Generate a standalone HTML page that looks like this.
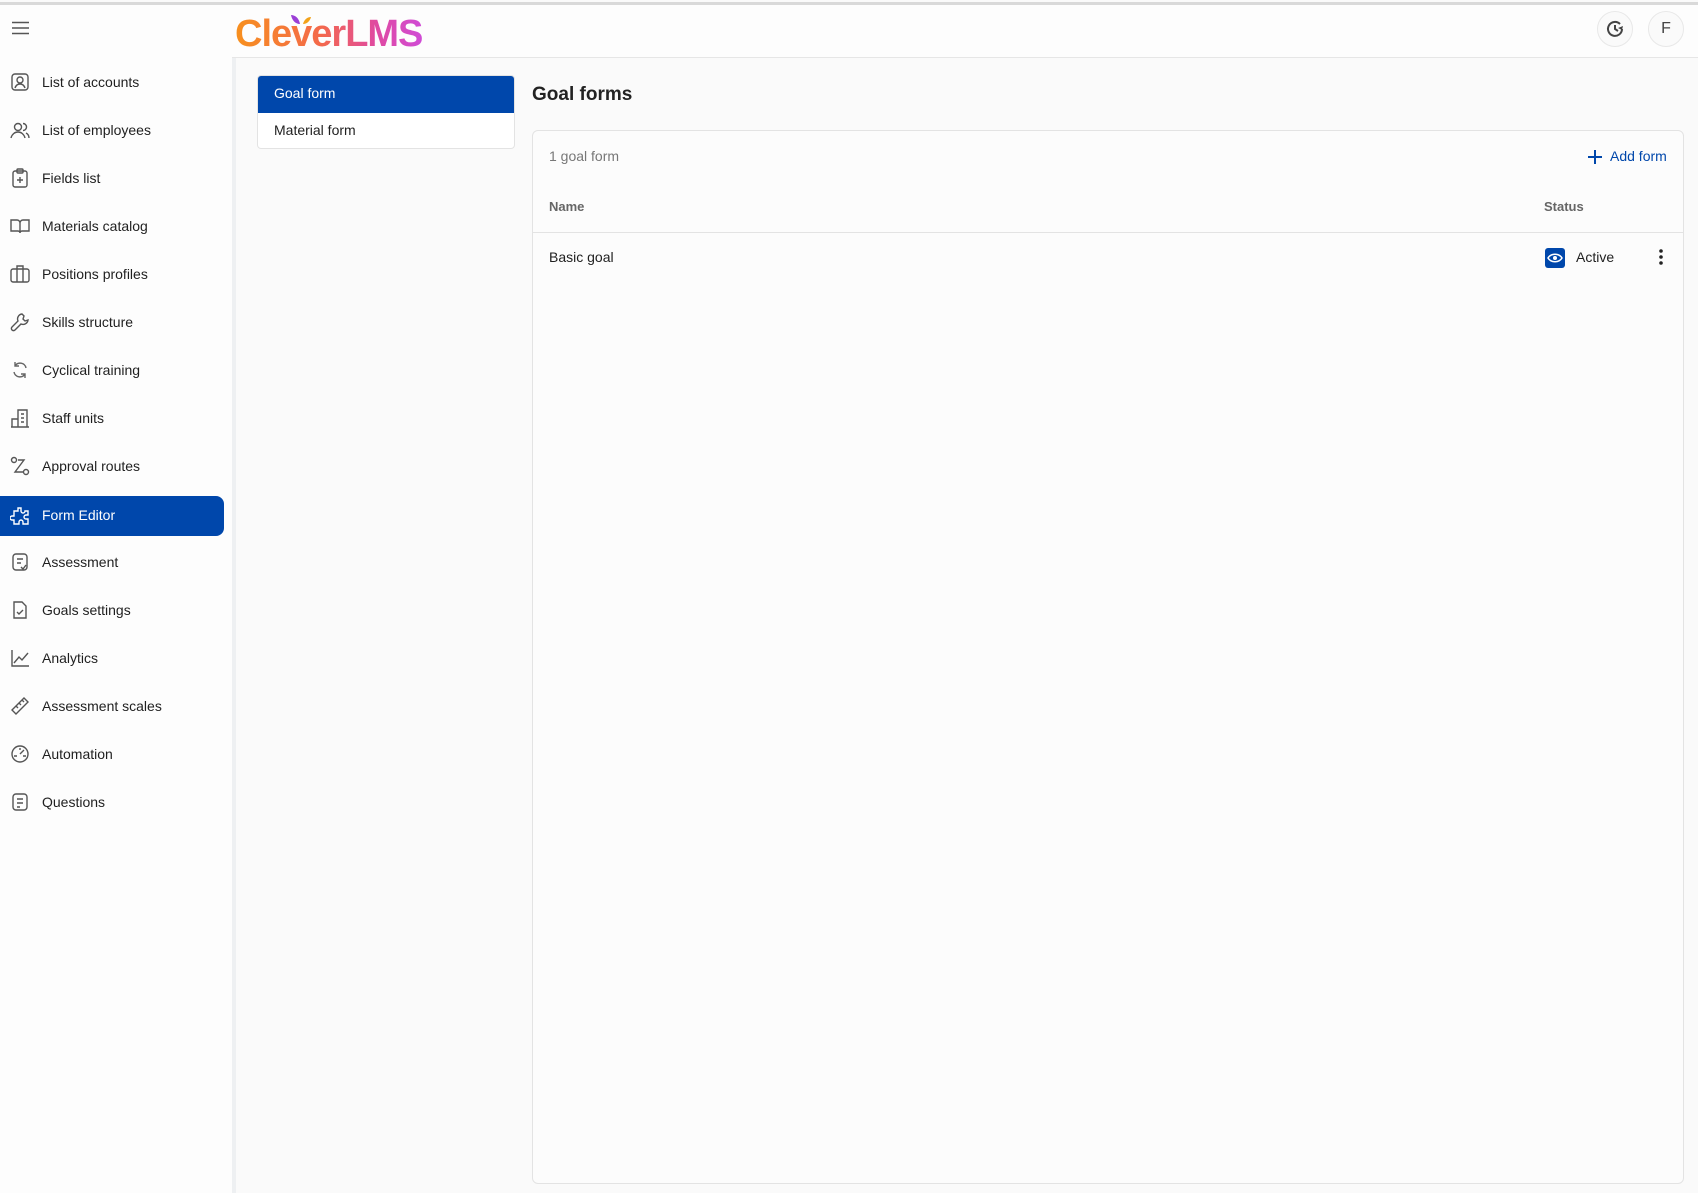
<!DOCTYPE html>
<html><head><meta charset="utf-8"><style>
*{box-sizing:border-box;margin:0;padding:0}
body{width:1698px;height:1193px;overflow:hidden;background:#fafafa;font-family:"Liberation Sans",Arial,sans-serif;color:#1f1f1f;position:relative}
.topbar{position:absolute;left:0;top:2px;width:1698px;height:3px;background:#d9d9d9}
.header{position:absolute;left:0;top:5px;width:1698px;height:52px;background:#fdfdfd}
.hline{position:absolute;left:232px;top:57px;width:1466px;height:1px;background:#e6e6e6}
.side{position:absolute;left:0;top:5px;width:232px;height:1188px;background:#fdfdfd}
.sborder{position:absolute;left:232px;top:58px;width:4px;height:1135px;background:#eef0f2}
.item{position:absolute;left:0;width:224px;height:40px;font-size:14px;line-height:40px;padding-left:42px;color:#1f1f1f}
.item svg{position:absolute;left:10px;top:10px}
.item.act{background:#0047ab;color:#fff;border-radius:0 8px 8px 0;line-height:38px}
.logo{position:absolute;left:235px;top:13px;font-size:38px;font-weight:bold;letter-spacing:-1px;background:linear-gradient(90deg,#f7901e 0%,#f46a4a 45%,#e04aa0 75%,#d04bd6 100%);-webkit-background-clip:text;color:transparent}
.circ{position:absolute;width:36px;height:36px;border-radius:50%;border:1px solid #e8e8e8;background:#fafafa;text-align:center;line-height:34px;font-size:16px;color:#444}
.tabs{position:absolute;left:257px;top:75px;width:258px;height:74px;border:1px solid #e3e3e3;border-radius:4px;background:#fff;overflow:hidden}
.tab{height:37px;line-height:34px;padding-left:16px;font-size:14px}
.tab.act{background:#0047ab;color:#fff}
.title{position:absolute;left:532px;top:84px;font-size:19px;font-weight:bold;color:#222}
.card{position:absolute;left:532px;top:130px;width:1152px;height:1054px;border:1px solid #e3e3e3;border-radius:6px;background:#fcfcfc}
.t{position:absolute;font-size:14px}
</style></head><body>
<div class="topbar"></div>
<div class="side"></div>
<div class="header"></div>
<div class="hline"></div>
<div class="sborder"></div>
<svg style="position:absolute;left:12px;top:21px" width="17" height="14"><path d="M0 1.5H17M0 7H17M0 12.5H17" stroke="#555" stroke-width="1.6"/></svg>
<div class="logo">CleverLMS</div>
<svg style="position:absolute;left:289px;top:14px" width="24" height="12"><path d="M2 1c4 0 8 3 9 9-5 0-8-4-9-9z" fill="#9b3fd6"/><path d="M22 3c-4 0-7 3-8 7 4 0 7-3 8-7z" fill="#f2a21a"/></svg>
<div class="circ" style="left:1597px;top:11px"><svg width="20" height="20" style="margin-top:7px" viewBox="0 0 20 20"><path d="M17 10a7 7 0 1 1-2-5" fill="none" stroke="#444" stroke-width="2"/><path d="M10 6v4l3 2" fill="none" stroke="#444" stroke-width="2"/><path d="M13 9l4 2 1-4z" fill="#444"/></svg></div>
<div class="circ" style="left:1648px;top:11px">F</div>

<div class="item" style="top:62px"><svg width="20" height="20" viewBox="0 0 20 20" fill="none" stroke="#555" stroke-width="1.4"><rect x="2" y="2" width="16" height="16" rx="3"/><circle cx="10" cy="8" r="3"/><path d="M5 16c1-3 3-4 5-4s4 1 5 4"/></svg>List of accounts</div>
<div class="item" style="top:110px"><svg width="20" height="20" viewBox="0 0 20 20" fill="none" stroke="#555" stroke-width="1.4"><circle cx="8" cy="7" r="3.5"/><path d="M1 18c1-4 4-6 7-6s6 2 7 6M13 3.5a3.5 3.5 0 0 1 0 7M16 13c2 1 3 3 3 5"/></svg>List of employees</div>
<div class="item" style="top:158px"><svg width="20" height="20" viewBox="0 0 20 20" fill="none" stroke="#555" stroke-width="1.4"><rect x="3" y="3" width="14" height="16" rx="2"/><rect x="7" y="1" width="6" height="4" rx="1"/><path d="M10 9v6M7 12h6"/></svg>Fields list</div>
<div class="item" style="top:206px"><svg width="20" height="20" viewBox="0 0 20 20" fill="none" stroke="#555" stroke-width="1.4"><path d="M1 4h6a3 3 0 0 1 3 3v10a2 2 0 0 0-2-2H1zM19 4h-6a3 3 0 0 0-3 3v10a2 2 0 0 1 2-2h7z"/></svg>Materials catalog</div>
<div class="item" style="top:254px"><svg width="20" height="20" viewBox="0 0 20 20" fill="none" stroke="#555" stroke-width="1.4"><rect x="1" y="5" width="18" height="13" rx="2"/><path d="M7 5V2h6v3M7 5v13M13 5v13"/></svg>Positions profiles</div>
<div class="item" style="top:302px"><svg width="20" height="20" viewBox="0 0 20 20" fill="none" stroke="#555" stroke-width="1.4"><path d="M12 2a5 5 0 0 0-4 7l-6 6a2 2 0 0 0 3 3l6-6a5 5 0 0 0 7-4l-3 1-2-2 1-3z"/></svg>Skills structure</div>
<div class="item" style="top:350px"><svg width="20" height="20" viewBox="0 0 20 20" fill="none" stroke="#666" stroke-width="1.4"><path d="M16 8a6 6 0 0 0-11-2M4 12a6 6 0 0 0 11 2M5 2v4h4M15 18v-4h-4"/></svg>Cyclical training</div>
<div class="item" style="top:398px"><svg width="20" height="20" viewBox="0 0 20 20" fill="none" stroke="#555" stroke-width="1.4"><path d="M1 19h18M2 19v-8h6M8 19V2h9v17M11 6h3M11 10h3M11 14h3"/></svg>Staff units</div>
<div class="item" style="top:446px"><svg width="20" height="20" viewBox="0 0 20 20" fill="none" stroke="#555" stroke-width="1.4"><circle cx="4" cy="4" r="2.5"/><circle cx="16" cy="16" r="2.5"/><path d="M8 4h6l-9 12h8"/></svg>Approval routes</div>
<div class="item act" style="top:496px"><svg width="20" height="20" viewBox="0 0 20 20" fill="none" stroke="#fff" stroke-width="1.4"><path d="M8 2h3v3a2 2 0 0 0 4 0V5h3v4h-2a2 2 0 0 0 0 4h2v5h-5v-2a2 2 0 0 0-4 0v2H4v-4H2a2 2 0 0 1 0-4h2V5h4z"/></svg>Form Editor</div>
<div class="item" style="top:542px"><svg width="20" height="20" viewBox="0 0 20 20" fill="none" stroke="#555" stroke-width="1.4"><rect x="3" y="2" width="14" height="16" rx="3"/><path d="M7 7h6M7 11h4M11 15l2 2 3-4"/></svg>Assessment</div>
<div class="item" style="top:590px"><svg width="20" height="20" viewBox="0 0 20 20" fill="none" stroke="#555" stroke-width="1.4"><path d="M4 2h8l4 4v12H4z"/><path d="M7 12l2 2 4-4"/></svg>Goals settings</div>
<div class="item" style="top:638px"><svg width="20" height="20" viewBox="0 0 20 20" fill="none" stroke="#555" stroke-width="1.4"><path d="M2 2v16h17M4 15l5-6 3 3 6-7"/></svg>Analytics</div>
<div class="item" style="top:686px"><svg width="20" height="20" viewBox="0 0 20 20" fill="none" stroke="#555" stroke-width="1.4"><path d="M2 14L14 2l4 4L6 18z M6 10l2 2M9 7l2 2M12 4l2 2"/></svg>Assessment scales</div>
<div class="item" style="top:734px"><svg width="20" height="20" viewBox="0 0 20 20" fill="none" stroke="#555" stroke-width="1.4"><circle cx="10" cy="10" r="8"/><path d="M10 10l4-4M4 12h3M13 12h3M10 4v2"/></svg>Automation</div>
<div class="item" style="top:782px"><svg width="20" height="20" viewBox="0 0 20 20" fill="none" stroke="#555" stroke-width="1.4"><rect x="3" y="2" width="14" height="16" rx="3"/><path d="M7 7h6M7 11h6M7 15h3"/></svg>Questions</div>

<div class="tabs"><div class="tab act">Goal form</div><div class="tab">Material form</div></div>
<div class="title">Goal forms</div>
<div class="card">
 <div class="t" style="left:16px;top:17px;color:#777">1 goal form</div>
 <svg style="position:absolute;left:1055px;top:19px" width="14" height="14"><path d="M7 0v14M0 7h14" stroke="#0047ab" stroke-width="2"/></svg>
 <div class="t" style="left:1077px;top:17px;color:#0047ab">Add form</div>
 <div class="t" style="left:16px;top:68px;color:#666;font-weight:bold;font-size:13px">Name</div>
 <div class="t" style="left:1011px;top:68px;color:#666;font-weight:bold;font-size:13px">Status</div>
 <div style="position:absolute;left:0;top:101px;width:1150px;height:1px;background:#e3e3e3"></div>
 <div class="t" style="left:16px;top:118px">Basic goal</div>
 <div style="position:absolute;left:1012px;top:117px;width:20px;height:20px;background:#0047ab;border-radius:3px"><svg width="20" height="20" viewBox="0 0 20 20"><path d="M3 10c3-5 11-5 14 0-3 5-11 5-14 0z" fill="none" stroke="#fff" stroke-width="1.5"/><circle cx="10" cy="10" r="2" fill="#fff"/></svg></div>
 <div class="t" style="left:1043px;top:118px">Active</div>
 <svg style="position:absolute;left:1125px;top:117px" width="6" height="18"><circle cx="3" cy="3" r="1.8" fill="#222"/><circle cx="3" cy="9" r="1.8" fill="#222"/><circle cx="3" cy="15" r="1.8" fill="#222"/></svg>
</div>
</body></html>
